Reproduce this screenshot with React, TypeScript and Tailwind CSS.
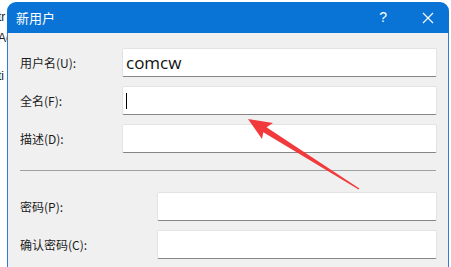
import React from 'react';

const cn = "font-['Microsoft_YaHei','Noto_Sans_CJK_SC',sans-serif]";

const Field: React.FC<{ label: string; wide?: boolean; value?: string; caret?: boolean }> = ({ label, wide, value, caret }) => (
  <div className="flex items-center h-[29px]">
    <div className={`${wide ? 'w-[137px]' : 'w-[102px]'} shrink-0 text-[12px] text-[#1b1b1b] ${cn}`}>{label}</div>
    <div className="flex-1 h-full bg-white border border-[#e3e3e3] border-b-[#858585] rounded-[2px] flex items-center pl-[3px]">
      {value && <span className="text-[17px] text-[#111] font-['Open_Sans',sans-serif] leading-none">{value}</span>}
      {caret && <span className="w-[1px] h-[16px] bg-black" />}
    </div>
  </div>
);

export default function App() {
  return (
    <div className="relative w-[451px] h-[267px] bg-white overflow-hidden">
      {/* bits of the window behind */}
      <div className="absolute left-[-2px] top-0 text-[12px] text-[#222] font-['Liberation_Sans',sans-serif] leading-none">
        <div className="mt-[11px]">tr</div>
        <div className="mt-[9px]">Ac</div>
        <div className="mt-[26px]">ti</div>
      </div>

      <div className="relative pl-[7px] pt-[2px] pr-[2px]">
        <div className="h-[31px] bg-[#0a74d6] rounded-t-[9px] flex items-center text-white">
          <span className={`pl-[9px] text-[13px] ${cn}`}>新用户</span>
          <span className="ml-auto text-[14px] font-['Liberation_Sans',sans-serif]">?</span>
          <svg className="ml-[35px] mr-[15px]" width="12" height="12" viewBox="0 0 12 12">
            <path d="M1 1 L11 11 M11 1 L1 11" stroke="white" strokeWidth="1.1" />
          </svg>
        </div>
        <div className="h-[240px] bg-[#f0f0f0] border-x border-[#2c80d2] pl-[12px] pr-[11px] pt-[15px]">
          <div className="flex flex-col gap-[9px]">
            <Field label="用户名(U):" value="comcw" />
            <Field label="全名(F):" caret />
            <Field label="描述(D):" />
          </div>
          <div className="mt-[17px] h-[1px] bg-[#a0a0a0] mr-[1px]" />
          <div className="mt-[21px] flex flex-col gap-[9px]">
            <Field label="密码(P):" wide />
            <Field label="确认密码(C):" wide />
          </div>
        </div>
      </div>

      <svg className="absolute left-0 top-0 pointer-events-none" width="451" height="267" viewBox="0 0 451 267">
        <polygon
          points="248,119 273,123 266.5,127.2 359.4,188.4 358.6,189.6 263.3,132.2 262,139"
          fill="#f23a3c"
        />
      </svg>
    </div>
  );
}
